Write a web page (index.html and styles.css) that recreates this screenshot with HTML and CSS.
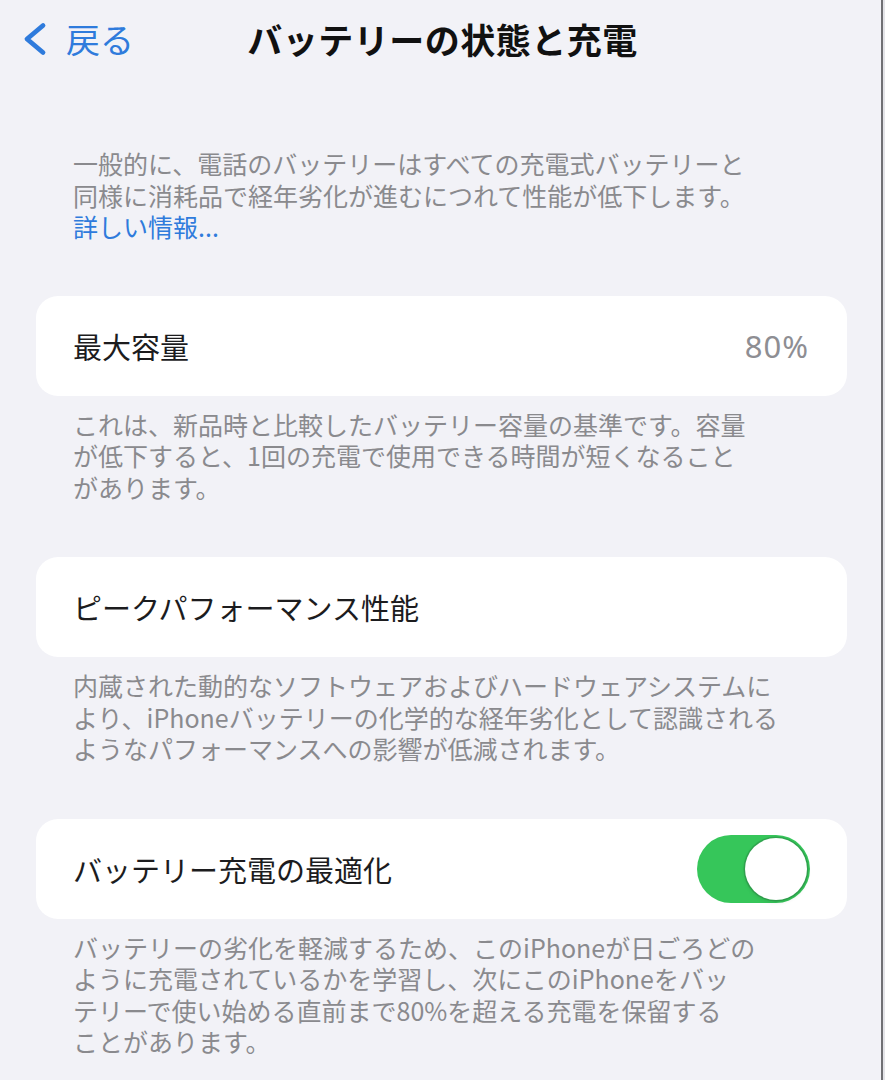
FILE: index.html
```html
<!DOCTYPE html>
<html lang="ja">
<head>
<meta charset="utf-8">
<title>バッテリーの状態と充電</title>
<link rel="stylesheet" href="styles.css">
</head>
<body>
<header class="nav">
  <a class="back" href="#">
    <svg class="chev" width="26" height="34" viewBox="0 0 26 34" aria-hidden="true">
      <path d="M22 3.5 L6 17 L22 30.5" fill="none" stroke="currentColor" stroke-width="4.8" stroke-linecap="round" stroke-linejoin="round"/>
    </svg>
    <span class="back-label">戻る</span>
  </a>
  <h1 class="title">バッテリーの状態と充電</h1>
  <div class="nav-spacer"></div>
</header>

<main class="content">
  <p class="note intro">一般的に、電話のバッテリーはすべての充電式バッテリーと<br>同様に消耗品で経年劣化が進むにつれて性能が低下します。<br><a class="link" href="#">詳しい情報...</a></p>

  <section class="group">
    <div class="card">
      <span class="label">最大容量</span>
      <span class="value">80%</span>
    </div>
    <p class="note">これは、新品時と比較したバッテリー容量の基準です。容量<br>が低下すると、1回の充電で使用できる時間が短くなること<br>があります。</p>
  </section>

  <section class="group">
    <div class="card">
      <span class="label">ピークパフォーマンス性能</span>
    </div>
    <p class="note">内蔵された動的なソフトウェアおよびハードウェアシステムに<br>より、iPhoneバッテリーの化学的な経年劣化として認識される<br>ようなパフォーマンスへの影響が低減されます。</p>
  </section>

  <section class="group">
    <div class="card">
      <span class="label">バッテリー充電の最適化</span>
      <span class="toggle on"><span class="thumb"></span></span>
    </div>
    <p class="note">バッテリーの劣化を軽減するため、このiPhoneが日ごろどの<br>ように充電されているかを学習し、次にこのiPhoneをバッ<br>テリーで使い始める直前まで80%を超える充電を保留する<br>ことがあります。</p>
  </section>
</main>
</body>
</html>
```

FILE: styles.css
```css
* { box-sizing: border-box; }

html, body {
  margin: 0;
  padding: 0;
}

html {
  background: #f2f2f7;
}

body {
  background: linear-gradient(to right, #f2f2f7 881px, #707074 881px, #707074 883px, #e4e4e8 883px);
  font-family: "Noto Sans CJK JP", "Noto Sans", sans-serif;
  color: #1c1c1e;
  width: 885px;
  min-height: 1080px;
  overflow: hidden;
}

.nav {
  height: 78px;
  display: grid;
  grid-template-columns: 1fr auto 1fr;
  align-items: center;
  padding: 0 21px;
}

.back {
  display: flex;
  align-items: center;
  gap: 19px;
  color: #2f7bdc;
  text-decoration: none;
  justify-self: start;
}

.chev { display: block; }

.back-label {
  font-size: 34px;
  line-height: 40px;
  font-weight: 400;
}

.title {
  margin: 0;
  font-size: 35px;
  line-height: 42px;
  font-weight: 700;
  color: #111;
  letter-spacing: 0.5px;
}

.content {
  padding: 70px 38px 0 36px;
}

.note {
  margin: 0;
  padding: 0 0 0 37px;
  font-size: 25px;
  line-height: 31.5px;
  color: #8a8a8e;
  white-space: nowrap;
}

.intro {
  margin-bottom: 53px;
}

.link {
  color: #2f7bdc;
  text-decoration: none;
}

.group {
  display: flex;
  flex-direction: column;
  gap: 13px;
  margin-bottom: 54px;
}

.card {
  height: 100px;
  background: #ffffff;
  border-radius: 22px;
  display: flex;
  align-items: center;
  justify-content: space-between;
  padding: 0 37px 0 37px;
}

.label {
  font-size: 29px;
  line-height: 36px;
  color: #1c1c1e;
}

.value {
  font-family: "Noto Sans", "Liberation Sans", sans-serif;
  font-size: 31px;
  letter-spacing: 1px;
  color: #8e8e93;
  padding-right: 1px;
}

.toggle {
  width: 113px;
  height: 68px;
  border-radius: 34px;
  background: #36c65a;
  position: relative;
  display: block;
}

.thumb {
  position: absolute;
  top: 3px;
  right: 3px;
  width: 62px;
  height: 62px;
  border-radius: 50%;
  background: #ffffff;
  box-shadow: 0 0 0 1.5px rgba(40, 110, 60, 0.35), 0 2px 4px rgba(0, 0, 0, 0.12);
}
```
